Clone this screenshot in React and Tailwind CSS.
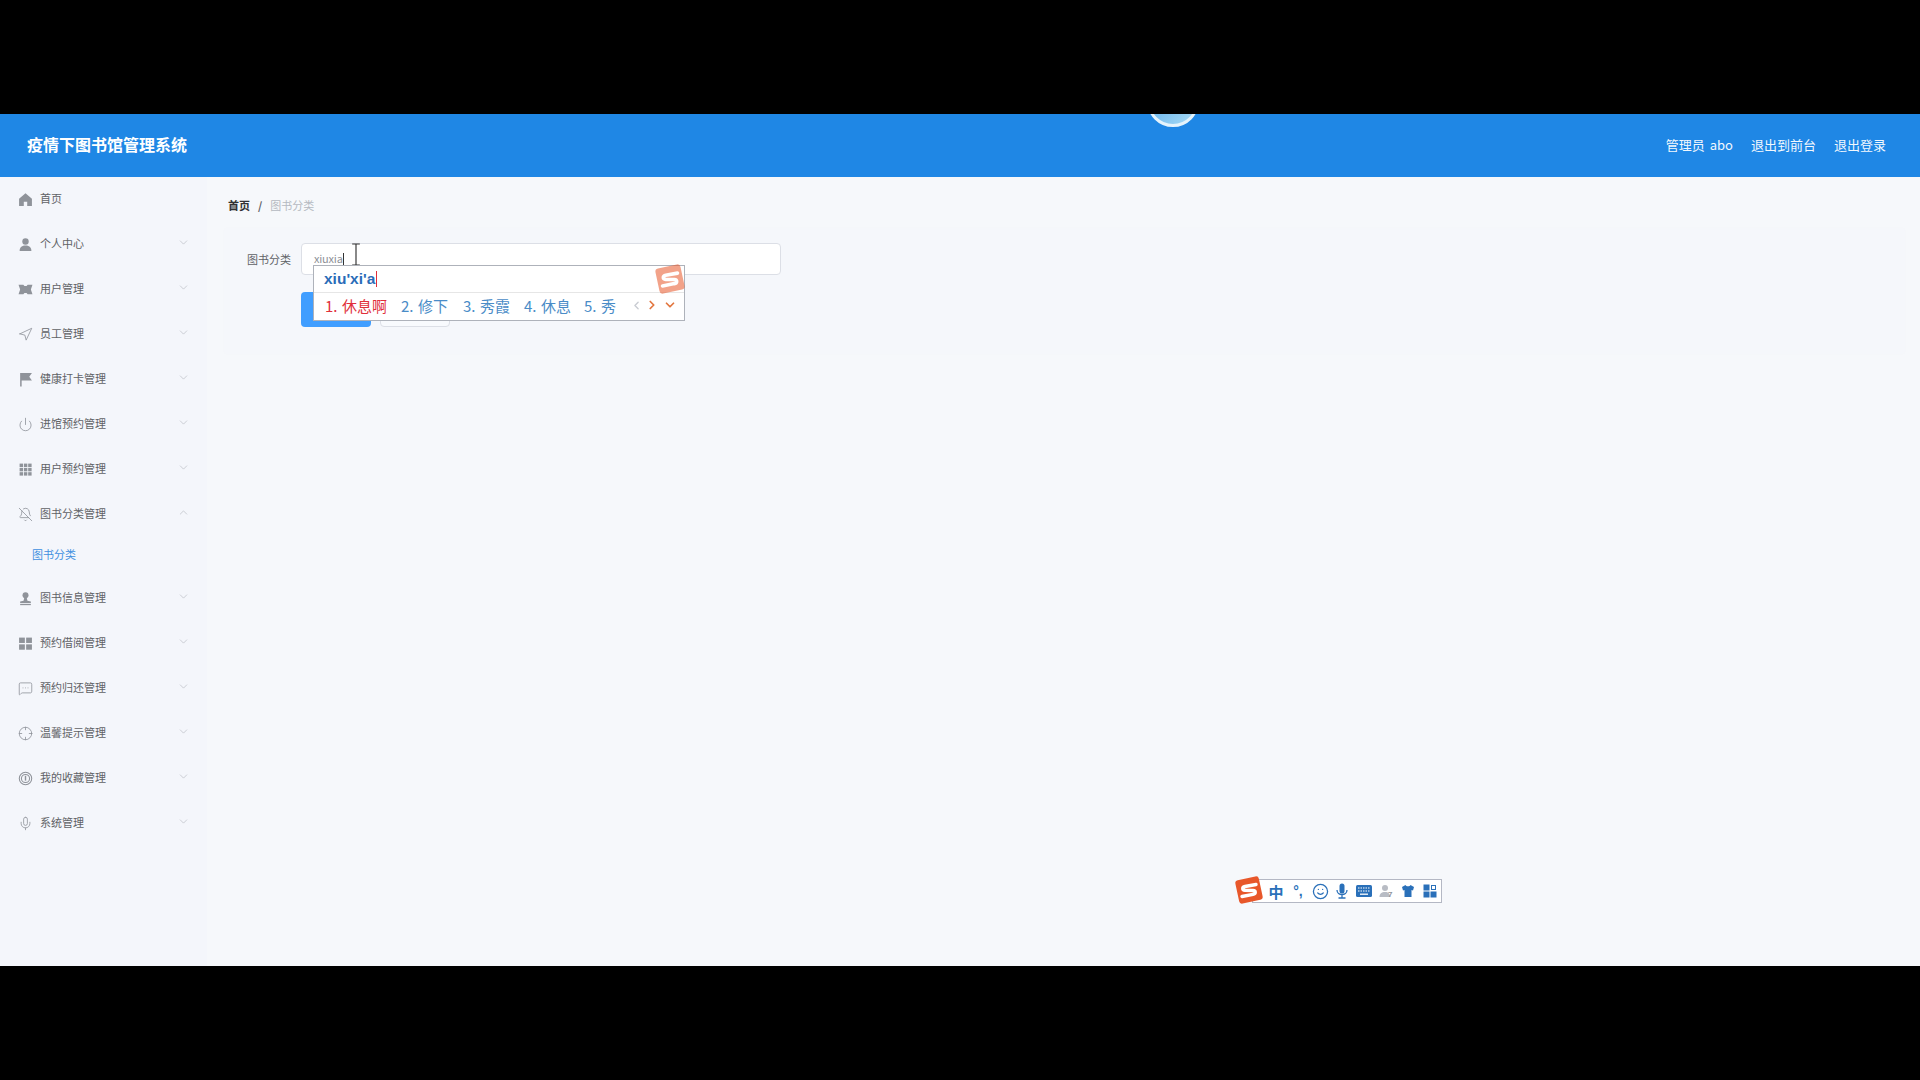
import React from "react";
import { ChevronDown, ChevronUp, ChevronLeft, ChevronRight, Power, Navigation, BellOff, MessageSquareMore, Crosshair, Mic, Smile } from "lucide-react";

const cn = "h-[15px] w-[15px] text-[#8f939a]";
const Home = () => <svg viewBox="0 0 14 14" className={cn} fill="currentColor"><path d="M7 1.2 13 6.4V13H8.6V9H5.4V13H1V6.4Z" /></svg>;
const Person = () => <svg viewBox="0 0 14 14" className={cn} fill="currentColor"><circle cx="7" cy="4.2" r="3" /><path d="M1.5 13c0-3.4 2.4-5 5.5-5s5.500 1.600 5.500 5Z" /></svg>;
const Ticket = () => <svg viewBox="0 0 14 14" className={cn} fill="currentColor"><path d="M0.500 2.500H5l1 1.200h2l1-1.200h4.500L12 7l1.500 4.500H9l-1-1.200H6l-1 1.200H0.500L2 7Z" /></svg>;
const Flag = () => <svg viewBox="0 0 14 14" className={cn} fill="currentColor"><path d="M2 1h11l-2.500 3.500L13 8H3.400v5.500H2Z" /></svg>;
const Grid9 = () => <svg viewBox="0 0 14 14" className={cn} fill="currentColor">{[1.5, 5.5, 9.5].flatMap((x) => [1.5, 5.5, 9.5].map((y) => <rect key={`${x}-${y}`} x={x} y={y} width="3.2" height="3.2" />))}</svg>;
const Grid4 = () => <svg viewBox="0 0 14 14" className={cn} fill="currentColor"><rect x="1" y="1.500" width="5.400" height="5" /><rect x="7.600" y="1.500" width="5.400" height="5" /><rect x="1" y="7.800" width="5.400" height="5" /><rect x="7.600" y="7.800" width="5.400" height="5" /></svg>;
const Stamp = () => <svg viewBox="0 0 14 14" className={cn} fill="currentColor"><circle cx="7" cy="4" r="2.800" /><path d="M5.800 6.500h2.400l.6 2.500 3.200.8V11.200H2V9.800l3.200-.8Z" /><rect x="2" y="12" width="10" height="1.200" /></svg>;
const Timer = () => <svg viewBox="0 0 14 14" className={cn} fill="none" stroke="currentColor" strokeWidth="1"><circle cx="7" cy="7" r="5.800" /><circle cx="7" cy="7" r="3.800" /><path d="M7 9V4.500" strokeWidth="1.300" /></svg>;
const L = ({ I }) => <I className={cn} strokeWidth={1.3} />;

const items = [
  { t: "首页", i: <Home />, c: false },
  { t: "个人中心", i: <Person /> },
  { t: "用户管理", i: <Ticket /> },
  { t: "员工管理", i: <L I={Navigation} /> },
  { t: "健康打卡管理", i: <Flag /> },
  { t: "进馆预约管理", i: <L I={Power} /> },
  { t: "用户预约管理", i: <Grid9 /> },
  { t: "图书分类管理", i: <L I={BellOff} />, open: true },
  { t: "图书信息管理", i: <Stamp /> },
  { t: "预约借阅管理", i: <Grid4 /> },
  { t: "预约归还管理", i: <L I={MessageSquareMore} /> },
  { t: "温馨提示管理", i: <L I={Crosshair} /> },
  { t: "我的收藏管理", i: <Timer /> },
  { t: "系统管理", i: <L I={Mic} /> },
];

const Row = ({ it }) => (
  <div className="flex h-[45px] items-center pb-[1px] pl-[18px] pr-[17px]">
    <div className="flex w-[15px] justify-center">{it.i}</div>
    <span className="mb-[1px] ml-[7px] flex-1 text-[11px] leading-none text-[#606266]">{it.t}</span>
    {it.c !== false && (
      <div className="mb-[4px]">
        {it.open ? <ChevronUp className="h-[13px] w-[13px] text-[#a8abb2]" strokeWidth={1} /> : <ChevronDown className="h-[13px] w-[13px] text-[#a8abb2]" strokeWidth={1} />}
      </div>
    )}
  </div>
);

const SLogo = ({ className, opacity = 1 }) => (
  <svg viewBox="0 0 30 30" className={className} style={{ opacity }}>
    <rect x="3" y="3" width="24" height="24" rx="3" fill="#e8572a" transform="rotate(-12 15 15)" />
    <path d="M22 9.500 11 11.500c-3 .6-3 3.600 0 3.800l8 .2c3 .2 3 3.300 0 3.800L8 21.500" fill="none" stroke="#fff" strokeWidth="3.400" strokeLinecap="round" />
  </svg>
);

const Cand = ({ n, t, red, w }) => (
  <span className={red ? "flex items-center text-[#e02f3a]" : "flex items-center text-[#4a8cc7]"} style={{ width: w }}>
    <span className="w-[17px]">{n}.</span>
    <span>{t}</span>
  </span>
);

export default function App() {
  return (
    <div className="flex h-screen w-full flex-col overflow-hidden bg-black font-['Noto_Sans_CJK_SC','Noto_Sans',sans-serif]">
      <div className="h-[114px] shrink-0 bg-black" />
      <div className="relative h-[852px] shrink-0 overflow-hidden">
        <header className="relative flex h-[63px] items-center overflow-hidden bg-[#1f87e5] pb-[3px] pl-[27px] pr-[34px] text-white">
          <div className="absolute left-[1147px] top-[-39px] h-[52px] w-[52px] rounded-full border-[3px] border-[#e4f3fc] bg-gradient-to-br from-[#4aa3e8] to-[#a9dcf5]" />
          <h1 className="flex-1 text-[16px] font-bold leading-none">疫情下图书馆管理系统</h1>
          <div className="flex gap-[18px] text-[13px] leading-none text-[#f2f8fe]">
            <span className="[word-spacing:2px]">管理员 abo</span>
            <span>退出到前台</span>
            <span>退出登录</span>
          </div>
        </header>
        <div className="flex h-[789px]">
          <aside className="w-[207px] shrink-0 bg-[#f4f6fb] shadow-[1px_0_3px_rgba(0,0,0,0.07)]">
            {items.slice(0, 8).map((it) => <Row key={it.t} it={it} />)}
            <div className="flex h-[39px] items-center pb-[4px] pl-[32px] text-[11px] leading-none text-[#3f8fe0]">图书分类</div>
            {items.slice(8).map((it) => <Row key={it.t} it={it} />)}
          </aside>
          <main className="flex-1 bg-[#f6f8fb] pl-[17px] pr-[15px]">
            <div className="flex h-[51px] items-center pl-[4px] pt-[5px] text-[11px] leading-none">
              <span className="font-bold text-[#303133]">首页</span>
              <span className="mx-[8px] font-bold text-[#606266]">/</span>
              <span className="text-[#b4b8c0]">图书分类</span>
            </div>
            <div className="h-[126px] rounded-[4px] bg-[#f5f7fb] pl-[23px] pt-[15px] shadow-[0_0_3px_rgba(0,0,0,0.02)]">
              <div className="flex h-[32px] items-center">
                <label className="w-[54px] text-[11px] leading-none text-[#606266]">图书分类</label>
                <div className="flex h-[32px] w-[480px] items-center rounded-[4px] border border-[#dcdfe6] bg-white pb-[1px] pl-[12px] text-[11px] leading-none tracking-[-0.2px] text-[#8e9096]">
                  xiuxia<span className="h-[12px] w-px bg-[#333]" />
                </div>
              </div>
              <div className="ml-[54px] mt-[17px] flex gap-[9px]">
                <div className="h-[35px] w-[70px] rounded-[4px] bg-[#409eff]" />
                <div className="h-[35px] w-[70px] rounded-[4px] border border-[#dcdfe6] bg-[#f8fafd]" />
              </div>
            </div>
          </main>
        </div>

        <svg viewBox="0 0 10 24" className="absolute left-[351px] top-[129px] h-[23px] w-[10px]" fill="none" stroke="#333" strokeWidth="1.200">
          <path d="M1 1h8M5 1v22M1 23h8" />
        </svg>

        <div className="absolute left-[313px] top-[151px] h-[56px] w-[372px] border border-[#aeb2ba] bg-white">
          <div className="flex h-[27px] items-center border-b border-[#e6e6e6] pl-[10px] font-['Liberation_Sans',sans-serif] text-[15.500px] font-bold leading-none text-[#2a6cb8]">
            xiu'xi'a<span className="ml-px h-[16px] w-px bg-[#e02f3a]" />
          </div>
          <div className="flex h-[26px] items-center pb-[2px] pl-[11px] text-[15px] leading-none">
            <Cand n="1" t="休息啊" red w="76px" />
            <Cand n="2" t="修下" w="62px" />
            <Cand n="3" t="秀霞" w="61px" />
            <Cand n="4" t="休息" w="60px" />
            <Cand n="5" t="秀" w="46px" />
            <ChevronLeft className="h-[13px] w-[13px] text-[#c9ccd2]" strokeWidth={2.5} />
            <ChevronRight className="ml-[2px] h-[14px] w-[14px] text-[#e2763f]" strokeWidth={3} />
            <ChevronDown className="ml-[4px] h-[14px] w-[14px] text-[#e2763f]" strokeWidth={3} />
          </div>
          <SLogo className="absolute left-[340px] top-[-3px] h-[32px] w-[32px]" opacity={0.55} />
        </div>

        <div className="absolute left-[1252px] top-[765px] flex h-[24px] w-[190px] items-center border border-[#b4b8c4] bg-white pl-[12px] text-[#2a70b9]">
          <span className="flex w-[22px] justify-center text-[15px] font-bold leading-none">中</span>
          <span className="flex w-[22px] justify-center font-['Liberation_Sans',sans-serif] text-[14px] font-bold leading-none">°,</span>
          <span className="flex w-[22px] justify-center"><Smile className="h-[17px] w-[17px]" strokeWidth={1.8} /></span>
          <span className="flex w-[22px] justify-center">
            <svg viewBox="0 0 14 16" className="h-[16px] w-[14px]" fill="currentColor"><rect x="4.500" y="0.500" width="5" height="10" rx="2.500" /><path d="M2 7c0 6 10 6 10 0M7 11v3.500M3.500 15h7" fill="none" stroke="currentColor" strokeWidth="1.300" /></svg>
          </span>
          <span className="flex w-[22px] justify-center">
            <svg viewBox="0 0 16 12" className="h-[12px] w-[16px]" fill="currentColor"><rect x="0" y="0" width="16" height="12" rx="1.500" /><path d="M2 3h12M2 6h12" stroke="#fff" strokeWidth="1.200" strokeDasharray="1.500 1" /><path d="M4 9.200h8" stroke="#fff" strokeWidth="1.300" /></svg>
          </span>
          <span className="relative flex w-[22px] justify-center">
            <svg viewBox="0 0 14 14" className="h-[14px] w-[14px] text-[#b8bcc4]" fill="currentColor"><circle cx="6" cy="4" r="3" /><path d="M0.500 13c0-3.500 2-5 5.500-5s5 1.500 5 5Z" /></svg>
            <span className="absolute left-[13px] top-[7px] font-['Liberation_Sans',sans-serif] text-[8px] font-bold leading-none text-[#8f939a]">7</span>
          </span>
          <span className="flex w-[22px] justify-center">
            <svg viewBox="0 0 14 14" className="h-[14px] w-[14px]" fill="currentColor"><path d="M4.500 1 1 3l1 3.500 1.500-.5V13h7V6l1.500.5L13 3 9.500 1C9 2.800 5 2.800 4.500 1Z" /></svg>
          </span>
          <span className="flex w-[22px] justify-center">
            <svg viewBox="0 0 14 14" className="h-[14px] w-[14px]" fill="currentColor"><rect x="0.500" y="0.500" width="6" height="6" /><rect x="8.500" y="1.500" width="4" height="4" fill="none" stroke="currentColor" /><rect x="0.500" y="7.500" width="6" height="6" /><rect x="7.500" y="7.500" width="6" height="6" /></svg>
          </span>
          <SLogo className="absolute left-[-19px] top-[-5px] h-[30px] w-[30px]" />
        </div>
      </div>
      <div className="flex-1 bg-black" />
    </div>
  );
}
